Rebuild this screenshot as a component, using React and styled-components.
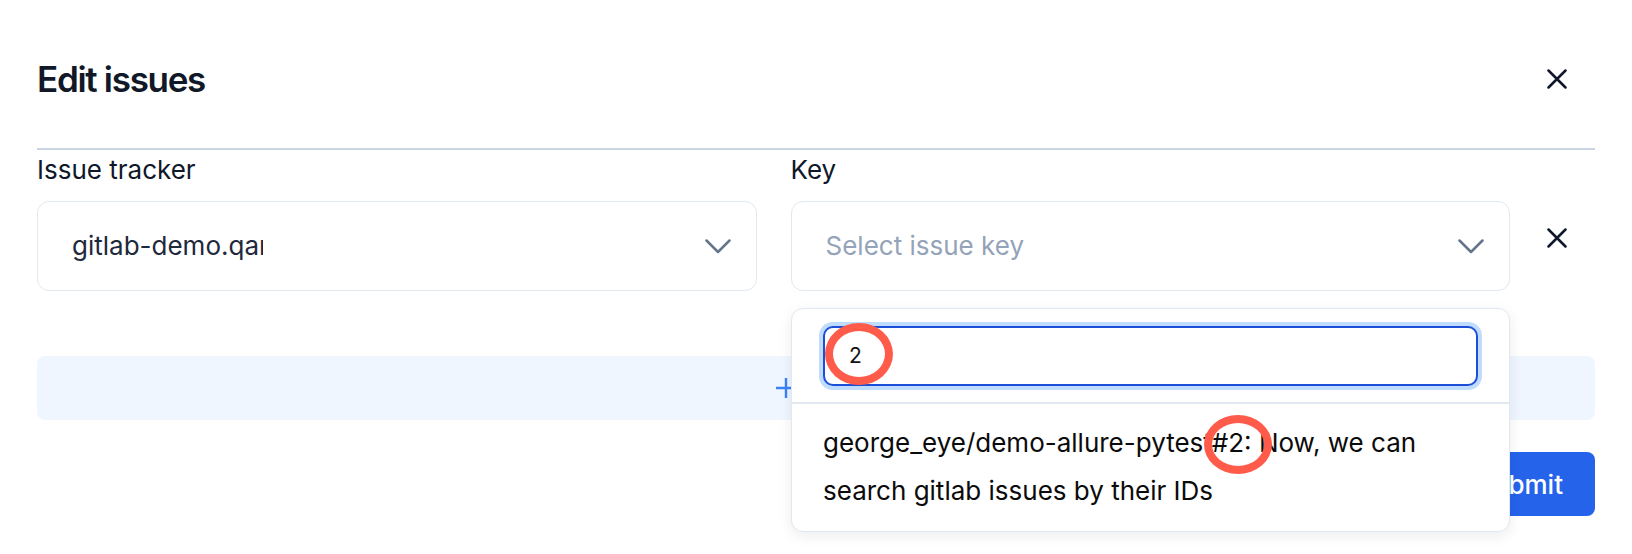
import React from 'react';
import styled, { createGlobalStyle } from 'styled-components';

const Global = createGlobalStyle`
  html, body { margin: 0; padding: 0; background: #ffffff; }
  body {
    font-family: Inter, "Noto Sans", sans-serif;
    color: #0f172a;
    -webkit-font-smoothing: antialiased;
  }
  * { box-sizing: border-box; }
`;

const Modal = styled.div`
  position: relative;
  width: 1632px;
  height: 554px;
  padding: 0 37px;
  overflow: hidden;
  background: #ffffff;
`;

const Header = styled.header`
  display: flex;
  align-items: center;
  justify-content: space-between;
  padding: 57px 28px 47px 0;
  border-bottom: 2px solid #cbd5e1;
`;

const Title = styled.h2`
  margin: 0;
  font-size: 35px;
  line-height: 44px;
  font-weight: 600;
  letter-spacing: -1.3px;
  color: #111827;
`;

const IconButton = styled.button`
  display: flex;
  align-items: center;
  justify-content: flex-start;
  padding: 0;
  margin: ${(p) => p.$margin || '0'};
  border: 0;
  background: none;
  cursor: pointer;
  color: #0f172a;
  align-self: ${(p) => p.$align || 'auto'};
`;

const Row = styled.div`
  display: grid;
  grid-template-columns: 1fr 1fr 51px;
  column-gap: 34px;
  margin-top: 4px;
`;

const Field = styled.div`
  position: relative;
  display: flex;
  flex-direction: column;
  gap: 15px;
`;

const Label = styled.label`
  font-size: 26px;
  line-height: 32px;
  font-weight: 400;
  color: #0f172a;
`;

const SelectBox = styled.div`
  display: flex;
  align-items: center;
  justify-content: space-between;
  height: 90px;
  padding: 0 25px 0 34px;
  border: 1.5px solid #e2e8f0;
  border-radius: 12px;
  background: #ffffff;
`;

const SelectValue = styled.span`
  display: block;
  max-width: ${(p) => (p.$clip ? `${p.$clip}px` : 'none')};
  overflow: hidden;
  white-space: nowrap;
  font-size: 26px;
  line-height: 32px;
  color: ${(p) => (p.$placeholder ? '#94a3b8' : '#1e293b')};
`;

const AddBar = styled.button`
  display: flex;
  align-items: center;
  justify-content: center;
  gap: 10px;
  width: 100%;
  height: 64px;
  margin-top: 65px;
  border: 0;
  border-radius: 8px;
  background: #eff6ff;
  color: #3b82f6;
  font-family: inherit;
  font-size: 26px;
  cursor: pointer;
`;

const Footer = styled.div`
  display: flex;
  justify-content: flex-end;
  margin-top: 32px;
`;

const SubmitButton = styled.button`
  height: 64px;
  padding: 0 32px;
  border: 0;
  border-radius: 8px;
  background: #2563eb;
  color: #ffffff;
  font-family: inherit;
  font-size: 26px;
  font-weight: 500;
  cursor: pointer;
`;

const Dropdown = styled.div`
  position: absolute;
  top: calc(100% + 17px);
  left: 0;
  right: 0;
  z-index: 10;
  border: 1.5px solid #e2e8f0;
  border-radius: 12px;
  background: #ffffff;
  box-shadow: 0 4px 14px rgba(15, 23, 42, 0.08);
`;

const SearchArea = styled.div`
  padding: 16.5px 31px 16px 31.5px;
  border-bottom: 2px solid #e2e8f0;
`;

const SearchInput = styled.input`
  display: block;
  width: 100%;
  height: 60px;
  padding: 0 24px;
  border: 2px solid #1d4ed8;
  border-radius: 10px;
  box-shadow: 0 0 0 4px #bfdbfe;
  outline: none;
  font-family: inherit;
  font-size: 21px;
  color: #111111;
  background: #ffffff;
`;

const Option = styled.div`
  padding: 15px 31px 16px 31.5px;
  font-size: 26px;
  line-height: 48px;
  color: #0b0b0b;
`;

const Annotation = styled.div`
  position: absolute;
  left: ${(p) => p.$x}px;
  top: ${(p) => p.$y}px;
  width: ${(p) => p.$w}px;
  height: ${(p) => p.$h}px;
  border: 8px solid #ff5b4b;
  border-radius: 50%;
  z-index: 20;
  pointer-events: none;
`;

const CloseIcon = () => (
  <svg width="20" height="20" viewBox="0 0 20 20" fill="none">
    <path d="M1.5 1.5 L18.5 18.5 M18.5 1.5 L1.5 18.5" stroke="currentColor" strokeWidth="2.5" strokeLinecap="round" />
  </svg>
);

const Chevron = () => (
  <svg width="26" height="15" viewBox="0 0 26 15" fill="none">
    <path d="M1.5 1.5 L13 13 L24.5 1.5" stroke="#64748b" strokeWidth="2.5" strokeLinecap="round" strokeLinejoin="round" />
  </svg>
);

const PlusIcon = () => (
  <svg width="20" height="20" viewBox="0 0 20 20" fill="none">
    <path d="M10 0 V20 M0 10 H20" stroke="#3b82f6" strokeWidth="2.4" />
  </svg>
);

export default function App() {
  return (
    <>
      <Global />
      <Modal>
        <Header>
          <Title>Edit issues</Title>
          <IconButton aria-label="Close">
            <CloseIcon />
          </IconButton>
        </Header>

        <Row>
          <Field>
            <Label>Issue tracker</Label>
            <SelectBox>
              <SelectValue $clip={191}>gitlab-demo.qameta.io</SelectValue>
              <Chevron />
            </SelectBox>
          </Field>
          <Field>
            <Label>Key</Label>
            <SelectBox>
              <SelectValue $placeholder>Select issue key</SelectValue>
              <Chevron />
            </SelectBox>
            <Dropdown>
              <SearchArea>
                <SearchInput defaultValue="2" />
              </SearchArea>
              <Option>george_eye/demo-allure-pytest#2: Now, we can search gitlab issues by their IDs</Option>
            </Dropdown>
          </Field>
          <IconButton aria-label="Remove" $align="start" $margin="74px 0 0 3px">
            <CloseIcon />
          </IconButton>
        </Row>

        <AddBar>
          <PlusIcon />
          <span>Add</span>
        </AddBar>

        <Footer>
          <SubmitButton>Submit</SubmitButton>
        </Footer>

        <Annotation $x={825} $y={323} $w={68} $h={62} />
        <Annotation $x={1204} $y={415} $w={68} $h={59} />
      </Modal>
    </>
  );
}
